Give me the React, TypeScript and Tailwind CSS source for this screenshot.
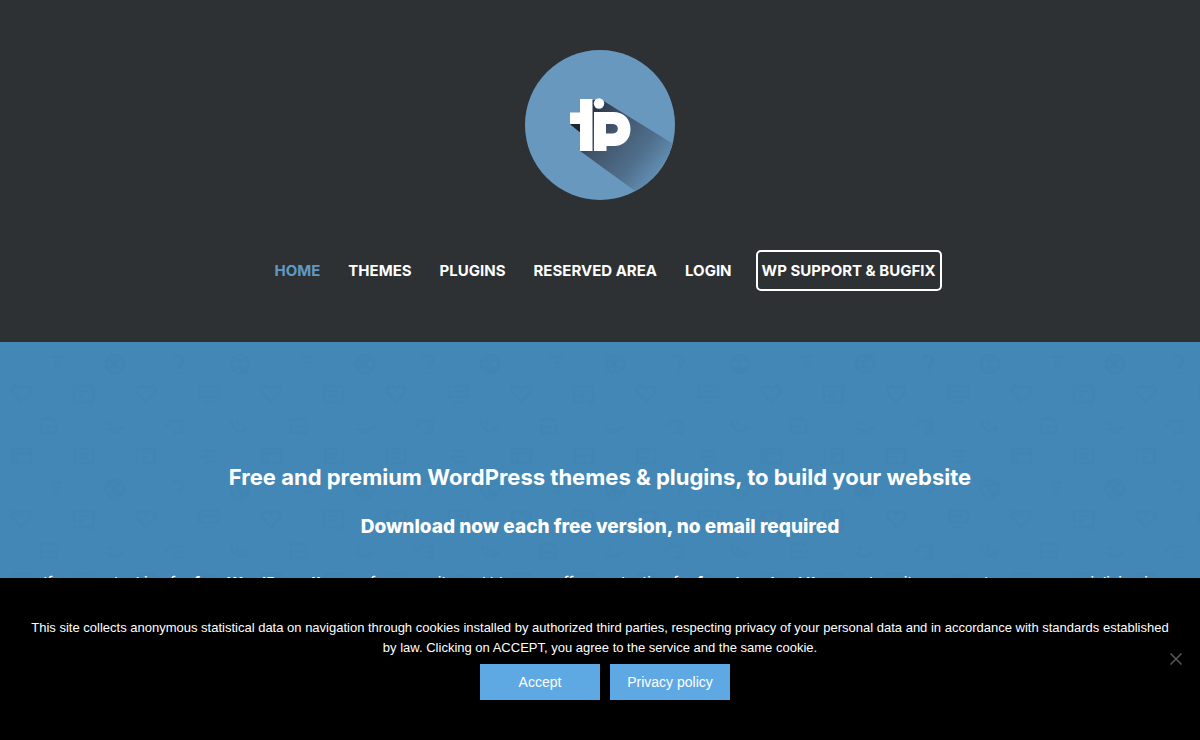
import { useState } from 'react'
import { X } from 'lucide-react'

const links = ['Home', 'Themes', 'Plugins', 'Reserved area', 'Login']

function Logo() {
  return (
    <svg viewBox="0 0 150 150" className="w-[150px] h-[150px]" role="img" aria-label="TIP logo">
      <defs>
        <clipPath id="disc">
          <circle cx="75" cy="75" r="75" />
        </clipPath>
        <linearGradient id="shadow" x1="60" y1="60" x2="138" y2="122" gradientUnits="userSpaceOnUse">
          <stop offset="0" stopColor="#26303f" />
          <stop offset="0.35" stopColor="#42566d" />
          <stop offset="0.7" stopColor="#4f6e8b" />
          <stop offset="1" stopColor="#6492b7" />
        </linearGradient>
      </defs>
      <circle cx="75" cy="75" r="75" fill="#6898be" />
      <g clipPath="url(#disc)">
        <path d="M77 50L150 95V170L55 101V82L46 75L66 50Z" fill="url(#shadow)" />
        <path d="M45 74H57V84Z" fill="#1d2530" />
      </g>
      <g fill="#fff">
        <path d="M55 49H67.500V101H55V74H45V62.500H55Z" />
        <circle cx="74" cy="53.500" r="5.200" />
        <path
          fillRule="evenodd"
          d="M69 62H88C99 62 105.500 69 105.500 79C105.500 89 99 96 89 96H81.500V101H69ZM81 74V83.500H88C94.500 83.500 94.500 74 88 74Z"
        />
      </g>
    </svg>
  )
}

// faint doodle wallpaper, repeats every 250 x 125
function Doodles() {
  return (
    <svg className="absolute inset-0 w-full h-full" aria-hidden="true">
      <defs>
        <pattern id="doodles" width="250" height="125" patternUnits="userSpaceOnUse">
          <g fill="none" stroke="#2f6d9c" strokeWidth="3" opacity="0.1">
            <path d="M50 15H63M53 20H62M54 25H60" />
            <circle cx="115" cy="22" r="9" />
            <path d="M108 17L121 27M109 27L120 16M115 13V31" />
            <path d="M173 17C175 12 184 13 183 19C182 23 179 22 179 27M179 30V32" />
            <circle cx="240" cy="22" r="9" />
            <path d="M233 18H246M235 13L243 30M232 26H247" />
            <path d="M21 60L12 50C10 44 18 42 21 47C24 42 33 44 30 51Z" />
            <path d="M74 44H93V60H74ZM78 49H88M78 54H84M91 60V64" />
            <path d="M146 60L137 50C135 44 143 42 146 47C149 42 158 44 155 51Z" />
            <path d="M199 44H218V55H199ZM203 60H214M203 49H214" />
            <path d="M40 80C43 75 52 75 56 80M41 82V91H56V82M45 85H52" />
            <path d="M106 86C113 90 121 88 125 84M107 82H112M109 90H119" />
            <path d="M168 79H182V91H173M178 83V87M164 83H170" />
            <path d="M231 78C232 87 239 91 247 88M236 79L239 84M242 84L249 87" />
            <path d="M12 107H31V121H12ZM12 111H31M17 111V121" />
            <path d="M75 107H93V121H75ZM79 112H89M79 116H86" />
            <path d="M137 107H155V121H137ZM141 111H151M141 116H148" />
            <path d="M202 109H216M200 115H214M204 120H217" />
          </g>
        </pattern>
      </defs>
      <rect width="100%" height="100%" fill="url(#doodles)" />
      <rect y="7" width="100%" height="1" fill="#4f86aa" />
    </svg>
  )
}

export default function App() {
  const [showCookies, setShowCookies] = useState(true)

  return (
    <div className="h-screen overflow-hidden bg-[#4287b5] text-white font-['Inter',sans-serif]">
      <header className="flex flex-col items-center gap-[50px] pt-[50px] pb-[51px] bg-[#2d3134]">
        <a href="#home">
          <Logo />
        </a>
        <nav className="flex flex-wrap items-center justify-center gap-7 pl-4 text-[15px] leading-[21px] font-bold uppercase">
          {links.map((link, i) => (
            <a key={link} href="#" className={i === 0 ? 'text-[#6199c4]' : 'hover:text-[#6199c4]'}>
              {link}
            </a>
          ))}
          <a href="#" className="-ml-1 rounded-[5px] border-2 border-white px-1 py-2">
            WP Support &amp; Bugfix
          </a>
        </nav>
      </header>

      <section className="relative">
        <Doodles />
        <div className="relative px-[30px] pt-[120px] pb-[120px] text-center">
          <h1 className="mb-5 text-[22px] leading-[30px] font-bold">
            Free and premium WordPress themes &amp; plugins, to build your website
          </h1>
          <h2 className="mb-[26px] text-[19px] leading-[30px] font-extrabold">
            Download now each free version, no email required
          </h2>
          <p className="text-[15px] leading-[30px]">
            If you are looking for <strong>free WordPress themes</strong> for your site and blog, we offer a selection
            for <strong>free download themes</strong>, to suit your needs, we are specializing in development and
            design for WordPress.
          </p>
        </div>
      </section>

      {showCookies && (
        <div
          role="dialog"
          aria-label="Cookie notice"
          className="fixed inset-x-0 bottom-0 bg-black px-[30px] py-10 text-center font-['Liberation_Sans',Arial,sans-serif]"
        >
          <p className="text-[13px] leading-5">
            This site collects anonymous statistical data on navigation through cookies installed by authorized third
            parties, respecting privacy of your personal data and in accordance with standards established by law.
            Clicking on ACCEPT, you agree to the service and the same cookie.
          </p>
          <div className="flex justify-center gap-2.5 mt-1.5 pl-2.5">
            <button
              onClick={() => setShowCookies(false)}
              className="w-[120px] h-9 bg-[#5ea9e3] text-sm hover:bg-[#4c98d3]"
            >
              Accept
            </button>
            <button className="w-[120px] h-9 bg-[#5ea9e3] text-sm hover:bg-[#4c98d3]">Privacy policy</button>
          </div>
          <button
            aria-label="Close"
            onClick={() => setShowCookies(false)}
            className="absolute right-3.5 top-1/2 -translate-y-1/2 text-[#555]"
          >
            <X className="w-5 h-5" />
          </button>
        </div>
      )}
    </div>
  )
}
